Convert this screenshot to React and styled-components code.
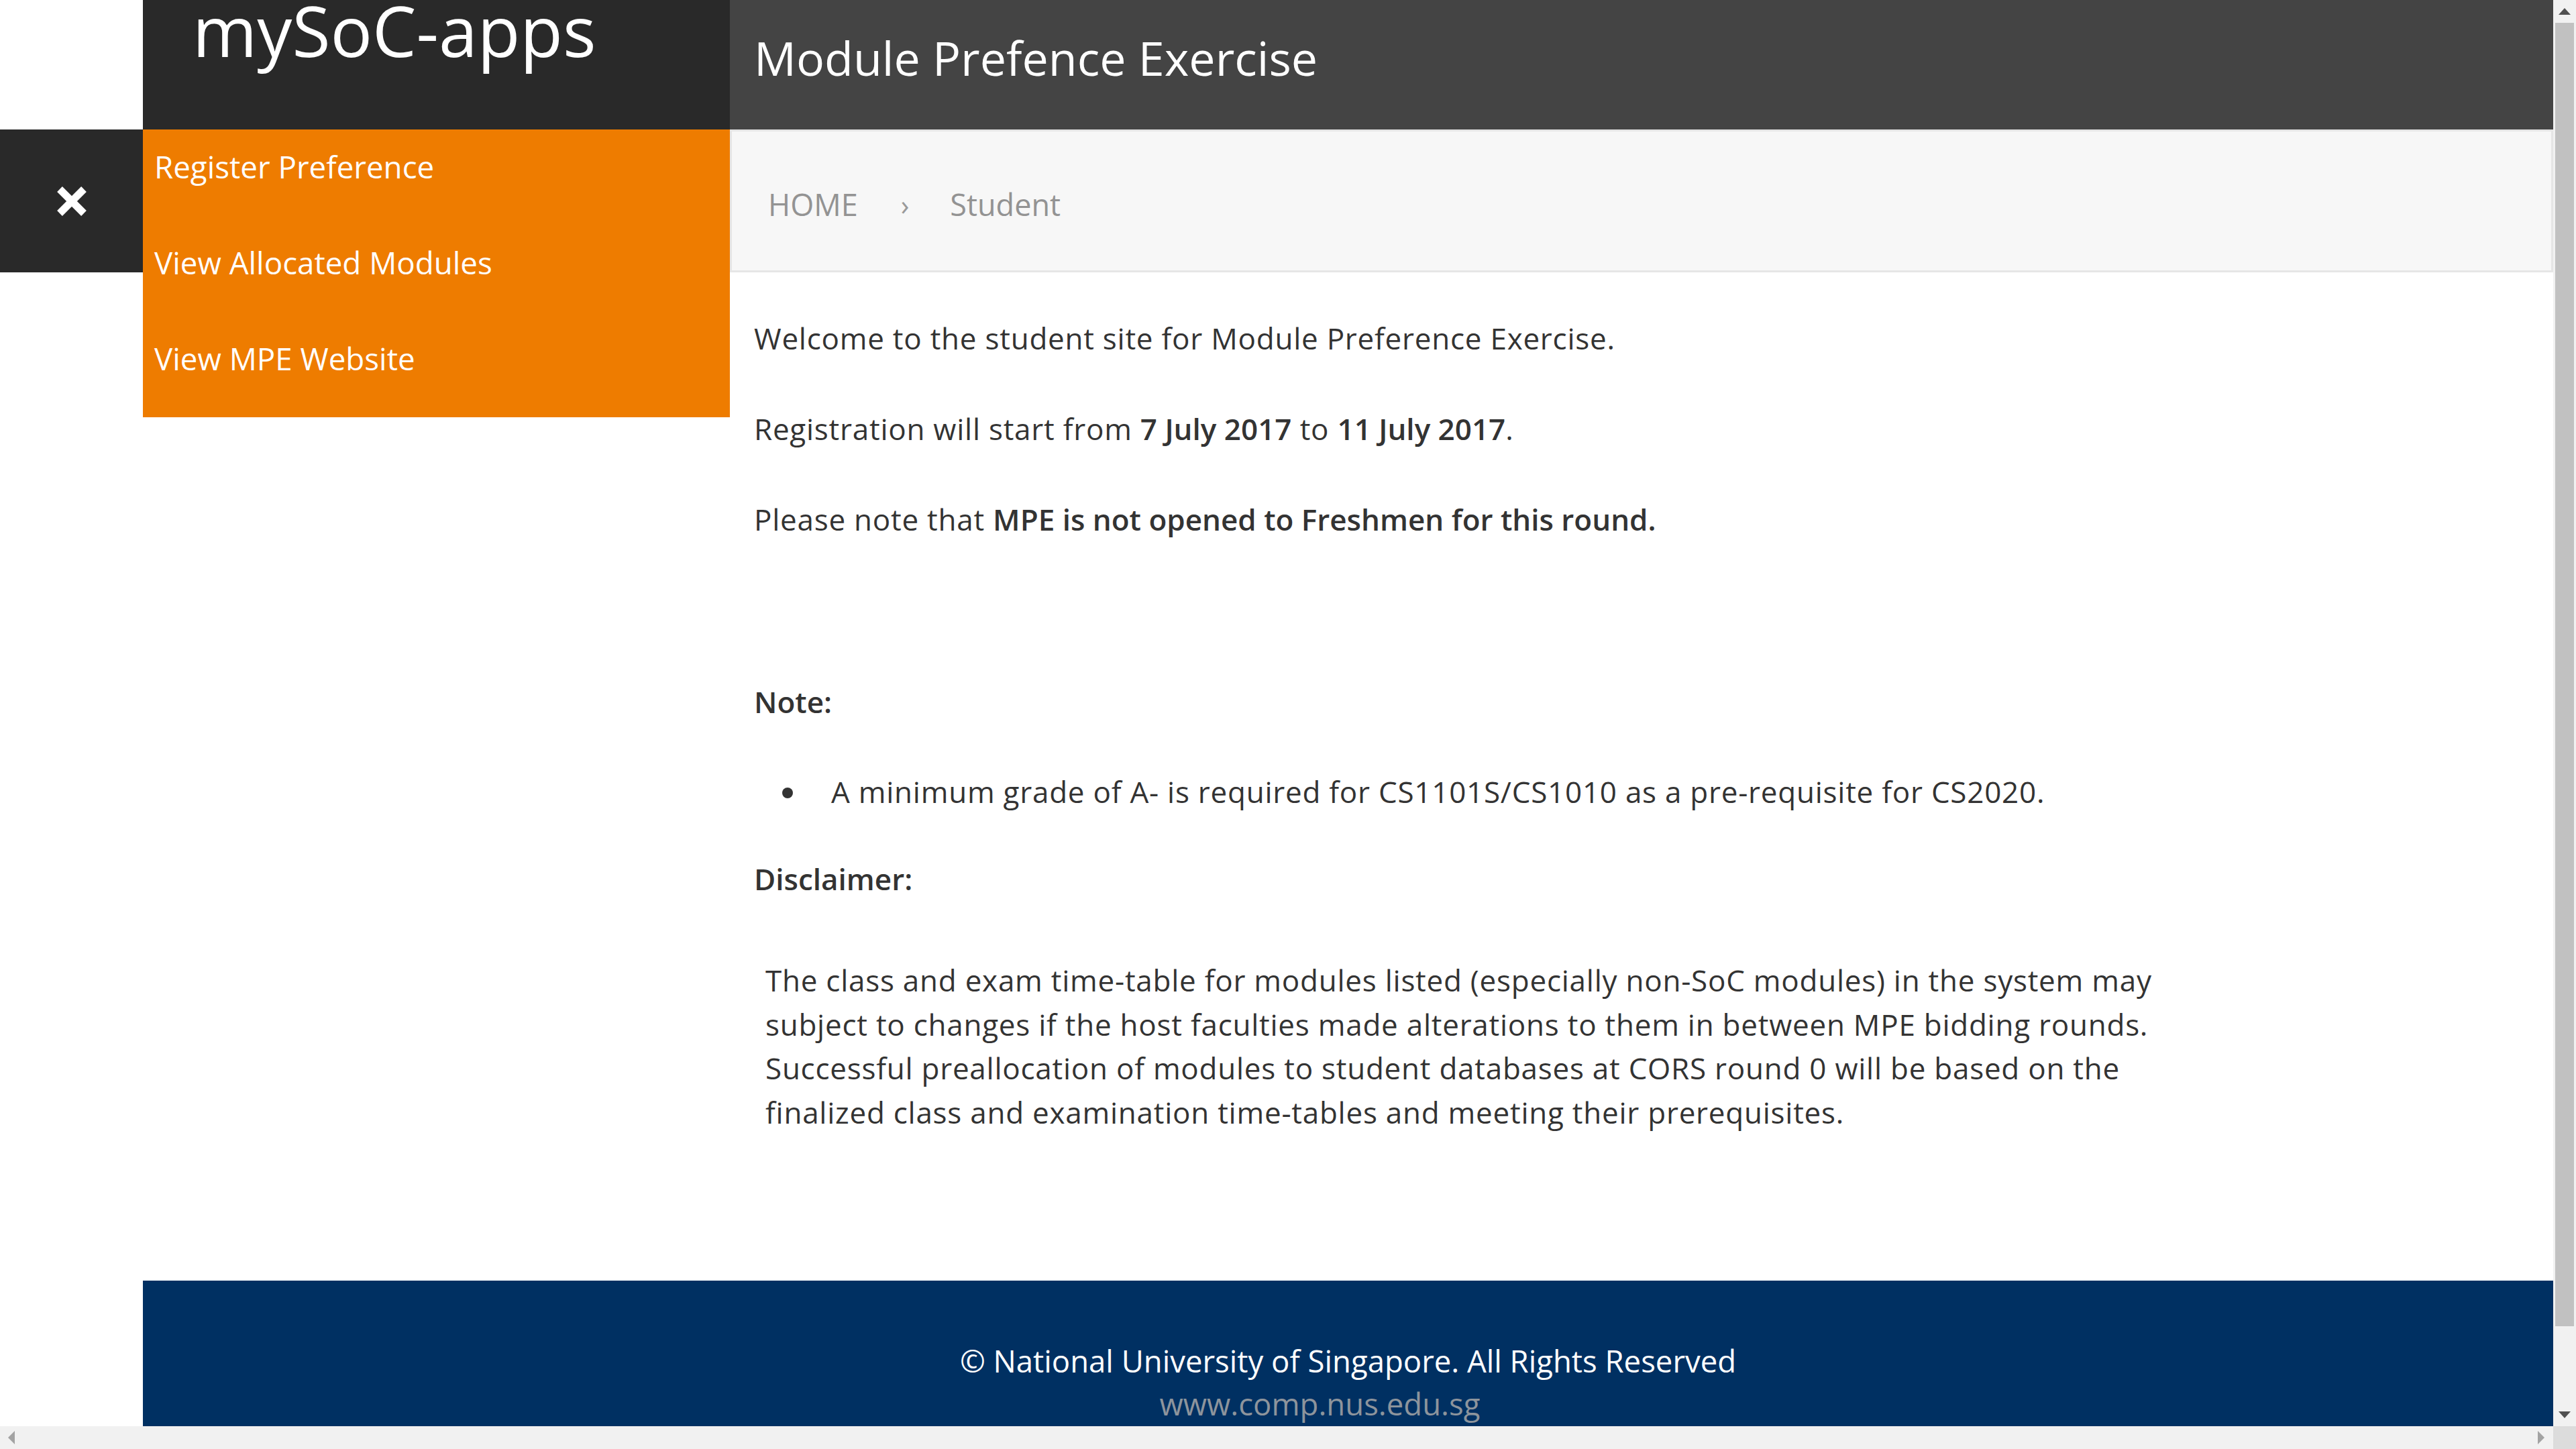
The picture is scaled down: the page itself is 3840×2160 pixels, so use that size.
import React from "react";
import styled, { createGlobalStyle } from "styled-components";

const Global = createGlobalStyle`
  html, body { margin: 0; padding: 0; overflow: hidden; background: #fff; }
  body { font-family: "Open Sans", "Noto Sans", "Liberation Sans", sans-serif; color: #333; }
  * { box-sizing: border-box; }
`;

const Frame = styled.div`
  width: 3840px;
  height: 2160px;
  display: grid;
  grid-template-columns: 1fr 34px;
  grid-template-rows: 1fr 34px;
  overflow: hidden;
`;

const Viewport = styled.div`
  overflow: hidden;
  background: #fff;
`;

const Page = styled.div`
  display: flex;
  min-height: 100%;
`;

const Gutter = styled.aside`
  width: 213px;
  flex: none;
  padding-top: 193px;
`;

const CloseButton = styled.button`
  width: 213px;
  height: 213px;
  border: 0;
  padding: 0;
  background: #292929;
  display: flex;
  align-items: center;
  justify-content: center;
  cursor: pointer;
`;

const Main = styled.div`
  flex: 1;
  display: flex;
  flex-direction: column;
  min-width: 0;
`;

const Header = styled.header`
  display: flex;
  height: 193px;
`;

const Logo = styled.div`
  width: 875px;
  flex: none;
  background: #292929;
  color: #fff;
  font-size: 104px;
  line-height: 90px;
  padding-left: 74px;
  white-space: nowrap;
  overflow: hidden;
`;

const TitleBar = styled.div`
  flex: 1;
  background: #444444;
  color: #fff;
  display: flex;
  align-items: center;
  padding: 0 0 21px 36px;
  font-size: 70px;
  white-space: nowrap;
`;

const Body = styled.div`
  display: flex;
  align-items: flex-start;
`;

const Sidebar = styled.nav`
  width: 875px;
  flex: none;
  background: #ee7c00;
  display: flex;
  flex-direction: column;
`;

const MenuItem = styled.a`
  display: block;
  height: 143px;
  padding: 22px 17px 0;
  color: #fff;
  font-size: 45.7px;
  line-height: 66px;
  text-decoration: none;
`;

const Content = styled.section`
  flex: 1;
  min-width: 0;
`;

const Breadcrumb = styled.div`
  height: 213px;
  background: #f7f7f7;
  border: 3px solid #e6e6e6;
  display: flex;
  align-items: center;
  padding: 9px 0 0 54px;
  font-size: 45px;
  gap: 61px;
`;

const Crumb = styled.span`
  color: #939393;
`;

const Sep = styled.span`
  color: #9a9a9a;
  font-size: 42px;
  margin-left: 3px;
`;

const Article = styled.article`
  padding: 65px 0 218px 36px;
  font-size: 44px;
  line-height: 66px;
  letter-spacing: 0.75px;
  color: #333;
`;

const P = styled.p`
  margin: 0 0 69px;
`;

const Heading = styled.p`
  margin: ${(p) => p.$top}px 0 0;
  font-weight: 600;
  letter-spacing: 0;
`;

const List = styled.ul`
  margin: 68px 0 0;
  padding-left: 80px;
  li { padding-left: 35px; }
`;

const Disclaimer = styled.p`
  margin: 86px 0 0;
  padding-left: 17px;
  max-width: 2140px;
  line-height: 65.5px;
`;

const B = styled.b`
  font-weight: 600;
  letter-spacing: 0;
`;

const Footer = styled.footer`
  background: #003062;
  color: #fff;
  text-align: center;
  font-size: 45.5px;
  line-height: 64px;
  padding: 87px 0 90px;
`;

const FooterLink = styled.a`
  display: inline-block;
  color: #8d949c;
  text-decoration: none;
  margin-right: 84px;
`;

const VScroll = styled.div`
  background: #f1f1f1;
  display: flex;
  flex-direction: column;
  align-items: center;
`;

const HScroll = styled.div`
  background: #f1f1f1;
  display: flex;
  align-items: center;
  justify-content: space-between;
  padding: 0 13px 0 12px;
`;

const Corner = styled.div`
  background: #dcdcdc;
`;

const ArrowBox = styled.div`
  width: 34px;
  height: 34px;
  flex: none;
  display: flex;
  align-items: center;
  justify-content: center;
`;

const Tri = styled.span`
  width: 0;
  height: 0;
  border-style: solid;
  ${(p) =>
    p.$dir === "up"
      ? `border-width: 0 9px 10px 9px; border-color: transparent transparent #505050 transparent;`
      : p.$dir === "down"
      ? `border-width: 10px 9px 0 9px; border-color: #505050 transparent transparent transparent;`
      : p.$dir === "left"
      ? `border-width: 10px 10px 10px 0; border-color: transparent #a3a3a3 transparent transparent;`
      : `border-width: 10px 0 10px 10px; border-color: transparent transparent transparent #a3a3a3;`}
`;

const Thumb = styled.div`
  width: 28px;
  height: 1943px;
  background: #c1c1c1;
  flex: none;
`;

const Track = styled.div`
  flex: 1;
`;

const CloseIcon = () => (
  <svg width="48" height="48" viewBox="0 0 48 48">
    <path d="M6 6 L42 42 M42 6 L6 42" stroke="#fff" strokeWidth="11" strokeLinecap="butt" />
  </svg>
);

export default function App() {
  return (
    <>
      <Global />
      <Frame>
        <Viewport>
          <Page>
            <Gutter>
              <CloseButton aria-label="Close menu">
                <CloseIcon />
              </CloseButton>
            </Gutter>
            <Main>
              <Header>
                <Logo>mySoC-apps</Logo>
                <TitleBar>Module Prefence Exercise</TitleBar>
              </Header>
              <Body>
                <Sidebar>
                  <MenuItem href="#">Register Preference</MenuItem>
                  <MenuItem href="#">View Allocated Modules</MenuItem>
                  <MenuItem href="#">View MPE Website</MenuItem>
                </Sidebar>
                <Content>
                  <Breadcrumb>
                    <Crumb>HOME</Crumb>
                    <Sep>›</Sep>
                    <Crumb>Student</Crumb>
                  </Breadcrumb>
                  <Article>
                    <P>Welcome to the student site for Module Preference Exercise.</P>
                    <P>
                      Registration will start from <B>7 July 2017</B> to <B>11 July 2017</B>.
                    </P>
                    <P>
                      Please note that <B>MPE is not opened to Freshmen for this round.</B>
                    </P>
                    <Heading $top={206}>Note:</Heading>
                    <List>
                      <li>A minimum grade of A- is required for CS1101S/CS1010 as a pre-requisite for CS2020.</li>
                    </List>
                    <Heading $top={64}>Disclaimer:</Heading>
                    <Disclaimer>
                      The class and exam time-table for modules listed (especially non-SoC modules) in the system may
                      subject to changes if the host faculties made alterations to them in between MPE bidding rounds.
                      Successful preallocation of modules to student databases at CORS round 0 will be based on the
                      finalized class and examination time-tables and meeting their prerequisites.
                    </Disclaimer>
                  </Article>
                </Content>
              </Body>
              <Footer>
                <div>© National University of Singapore. All Rights Reserved</div>
                <FooterLink href="#">www.comp.nus.edu.sg</FooterLink>
              </Footer>
            </Main>
          </Page>
        </Viewport>
        <VScroll>
          <ArrowBox><Tri $dir="up" /></ArrowBox>
          <Thumb />
          <Track />
          <ArrowBox><Tri $dir="down" /></ArrowBox>
        </VScroll>
        <HScroll>
          <Tri $dir="left" />
          <Tri $dir="right" />
        </HScroll>
        <Corner />
      </Frame>
    </>
  );
}
